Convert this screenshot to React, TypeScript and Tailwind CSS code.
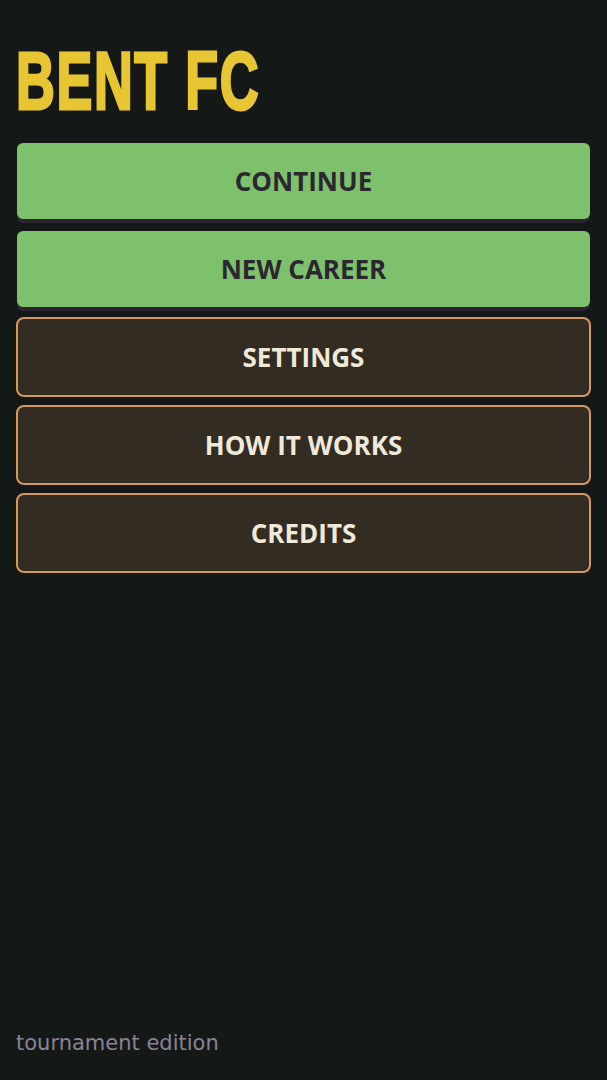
import React from "react";

const primary = ["CONTINUE", "NEW CAREER"];
const secondary = ["SETTINGS", "HOW IT WORKS", "CREDITS"];

const App: React.FC = () => {
  return (
    <div className="flex h-[1080px] w-full flex-col bg-[#141817] px-4">
      {/* Title */}
      <h1 className="mt-10 h-[84px] origin-left scale-x-[0.655] whitespace-nowrap font-['Liberation_Sans',sans-serif] text-[82px] font-bold leading-none tracking-[2.5px] text-[#e8c532] [-webkit-text-stroke:3px_#e8c532]">
        BENT FC
      </h1>

      {/* Menu */}
      <div className="mt-[17px] flex flex-col gap-2 font-['Open_Sans',sans-serif] text-[26px] font-bold">
        {primary.map((label) => (
          <div key={label} className="h-20">
            <button className="mx-px flex h-[76px] w-[calc(100%-2px)] translate-y-[2px] items-center justify-center rounded-md bg-[#7dc16d] text-[#2b2630] shadow-[0_4px_0_#2a2430]">
              {label}
            </button>
          </div>
        ))}
        {secondary.map((label) => (
          <button
            key={label}
            className="flex h-20 w-full items-center justify-center rounded-lg border-2 border-[#d39a5c] bg-[#332c22] text-[#efe9da]"
          >
            {label}
          </button>
        ))}
      </div>

      {/* Footer */}
      <div className="mt-auto pb-[25px] font-['DejaVu_Sans',sans-serif] text-[21px] leading-6 text-[#8a8297]">
        tournament edition
      </div>
    </div>
  );
};

export default App;
